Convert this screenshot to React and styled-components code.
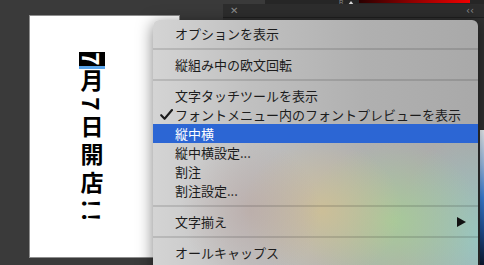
import React from 'react';
import styled, { createGlobalStyle } from 'styled-components';

const GlobalStyle = createGlobalStyle`
  html, body {
    margin: 0;
    width: 484px;
    height: 265px;
    overflow: hidden;
    background: #3a3a3a;
  }
`;

const Desktop = styled.div`
  position: relative;
  width: 484px;
  height: 265px;
  overflow: hidden;
  background: #3a3a3a;
  font-family: "Noto Sans CJK JP", "Noto Sans", sans-serif;
`;

/* strip of the panel that sits above everything, mostly off screen */
const TopStrip = styled.div`
  position: absolute;
  left: 265px;
  top: 0;
  right: 0;
  height: 5px;
  background: #262626;
  display: flex;
  align-items: flex-start;
  gap: 5px;
  padding-left: 74px;
  box-sizing: border-box;
`;

const StripLabel = styled.span`
  font-family: "Liberation Sans", sans-serif;
  font-size: 6px;
  line-height: 5px;
  color: #8a8a8a;
`;

const Marker = styled.span`
  width: 0;
  height: 0;
  margin-top: 1px;
  border-left: 3px solid transparent;
  border-right: 3px solid transparent;
  border-bottom: 4px solid #d8d8d8;
`;

const RedBar = styled.div`
  width: 111px;
  height: 3px;
  background: linear-gradient(to right, #2a0000, #8a0000 45%, #f00000);
`;

const Panel = styled.div`
  position: absolute;
  left: 223px;
  top: 4px;
  right: 0;
  bottom: 0;
  background: #303030;
  display: flex;
  flex-direction: column;
`;

const TitleBar = styled.div`
  height: 15px;
  background: #2d2d2d;
  border-bottom: 1px solid #1f1f1f;
  display: flex;
  align-items: center;
  justify-content: space-between;
  padding: 0 10px 0 7px;
  color: #8c8c8c;
  font-family: "DejaVu Sans", sans-serif;
  font-size: 10px;
`;

const PanelBody = styled.div`
  flex: 1;
  display: flex;
  justify-content: flex-end;
`;

const Preview = styled.div`
  width: 4px;
  margin-top: 112px;
  height: 135px;
  background: linear-gradient(to bottom, #eef2f6 0%, #9fc2ea 25%, #3a82dc 50%, #1d4f96 75%, #0b1a33 100%);
`;

const Document = styled.div`
  position: absolute;
  left: 29px;
  top: 15px;
  width: 151px;
  height: 243px;
  box-sizing: border-box;
  background: #fff;
  border: 1px solid #8e8e8e;
  padding: 36px 0 0 51px;
`;

const VerticalText = styled.div`
  writing-mode: vertical-rl;
  width: 24px;
  font-family: "Noto Sans CJK JP", sans-serif;
  font-weight: 700;
  font-size: 23px;
  line-height: 24px;
  letter-spacing: 5px;
  color: #000;
`;

const Selected = styled.span`
  display: inline-block;
  width: 24px;
  line-height: 24px;
  letter-spacing: 0;
  padding-block: 1px;
  margin-block-end: 1px;
  background: #000;
  color: #fff;
  border-bottom: 3px solid #58a4ec;
  text-align: center;
`;

const Nudge = styled.span`
  padding-block: ${({ $before = 0 }) => $before}px ${({ $after = 0 }) => $after}px;
`;

const Menu = styled.div`
  position: absolute;
  left: 153px;
  top: 20px;
  width: 325px;
  bottom: -20px;
  border-radius: 6px 6px 0 0;
  padding-top: 4px;
  box-sizing: border-box;
  display: flex;
  flex-direction: column;
  box-shadow: 0 3px 16px rgba(0, 0, 0, 0.5);
  background:
    radial-gradient(ellipse 70px 70px at 30% 72%, rgba(184, 164, 160, 0.6), rgba(184, 164, 160, 0) 100%),
    radial-gradient(ellipse 80px 70px at 52% 72%, rgba(210, 192, 146, 0.8), rgba(210, 192, 146, 0) 100%),
    radial-gradient(ellipse 90px 80px at 74% 76%, rgba(166, 206, 150, 0.85), rgba(166, 206, 150, 0) 100%),
    radial-gradient(ellipse 80px 110px at 100% 82%, rgba(150, 200, 196, 0.9), rgba(150, 200, 196, 0) 100%),
    linear-gradient(to right, #d4d4d4 0%, #c0c0c0 30%, #b0b0b0 65%, #a9a9a9 100%);
`;

const Item = styled.div`
  display: grid;
  grid-template-columns: 22px 1fr auto;
  align-items: center;
  height: 19px;
  padding-right: 12px;
  font-size: 13px;
  line-height: 19px;
  color: ${({ $active }) => ($active ? '#fff' : '#1c1c1c')};
  background: ${({ $active }) => ($active ? '#2c66d4' : 'transparent')};
`;

const CheckCell = styled.span`
  justify-self: end;
  margin-right: 2px;
  display: flex;
  align-items: center;
`;

const Separator = styled.div`
  height: 2px;
  margin: 5px 0;
  background: rgba(0, 0, 0, 0.12);
`;

function Check() {
  return (
    <svg width="13" height="11" viewBox="0 0 13 11">
      <path d="M1.2 6.2 L4.6 9.8 L12 1" fill="none" stroke="#1c1c1c" strokeWidth="2.1" strokeLinecap="round" strokeLinejoin="round" />
    </svg>
  );
}

function SubArrow() {
  return (
    <svg width="9" height="10" viewBox="0 0 9 10">
      <path d="M0 0 L9 5 L0 10 Z" fill="#111" />
    </svg>
  );
}

const menu = [
  { label: 'オプションを表示' },
  { sep: true },
  { label: '縦組み中の欧文回転' },
  { sep: true },
  { label: '文字タッチツールを表示' },
  { label: 'フォントメニュー内のフォントプレビューを表示', checked: true },
  { label: '縦中横', active: true },
  { label: '縦中横設定...' },
  { label: '割注' },
  { label: '割注設定...' },
  { sep: true },
  { label: '文字揃え', submenu: true },
  { sep: true },
  { label: 'オールキャップス' },
];

export default function App() {
  return (
    <Desktop>
      <GlobalStyle />
      <TopStrip>
        <StripLabel>R</StripLabel>
        <Marker />
        <RedBar />
      </TopStrip>
      <Panel>
        <TitleBar>
          <span>✕</span>
          <span>‹‹</span>
        </TitleBar>
        <PanelBody>
          <Preview />
        </PanelBody>
      </Panel>
      <Document>
        <VerticalText>
          <Selected>7</Selected>月<Nudge $before={1} $after={2}>7</Nudge>日開店!!
        </VerticalText>
      </Document>
      <Menu>
        {menu.map((m, i) =>
          m.sep ? (
            <Separator key={i} />
          ) : (
            <Item key={i} $active={m.active}>
              <CheckCell>{m.checked && <Check />}</CheckCell>
              <span>{m.label}</span>
              {m.submenu ? <SubArrow /> : <span />}
            </Item>
          )
        )}
      </Menu>
    </Desktop>
  );
}
